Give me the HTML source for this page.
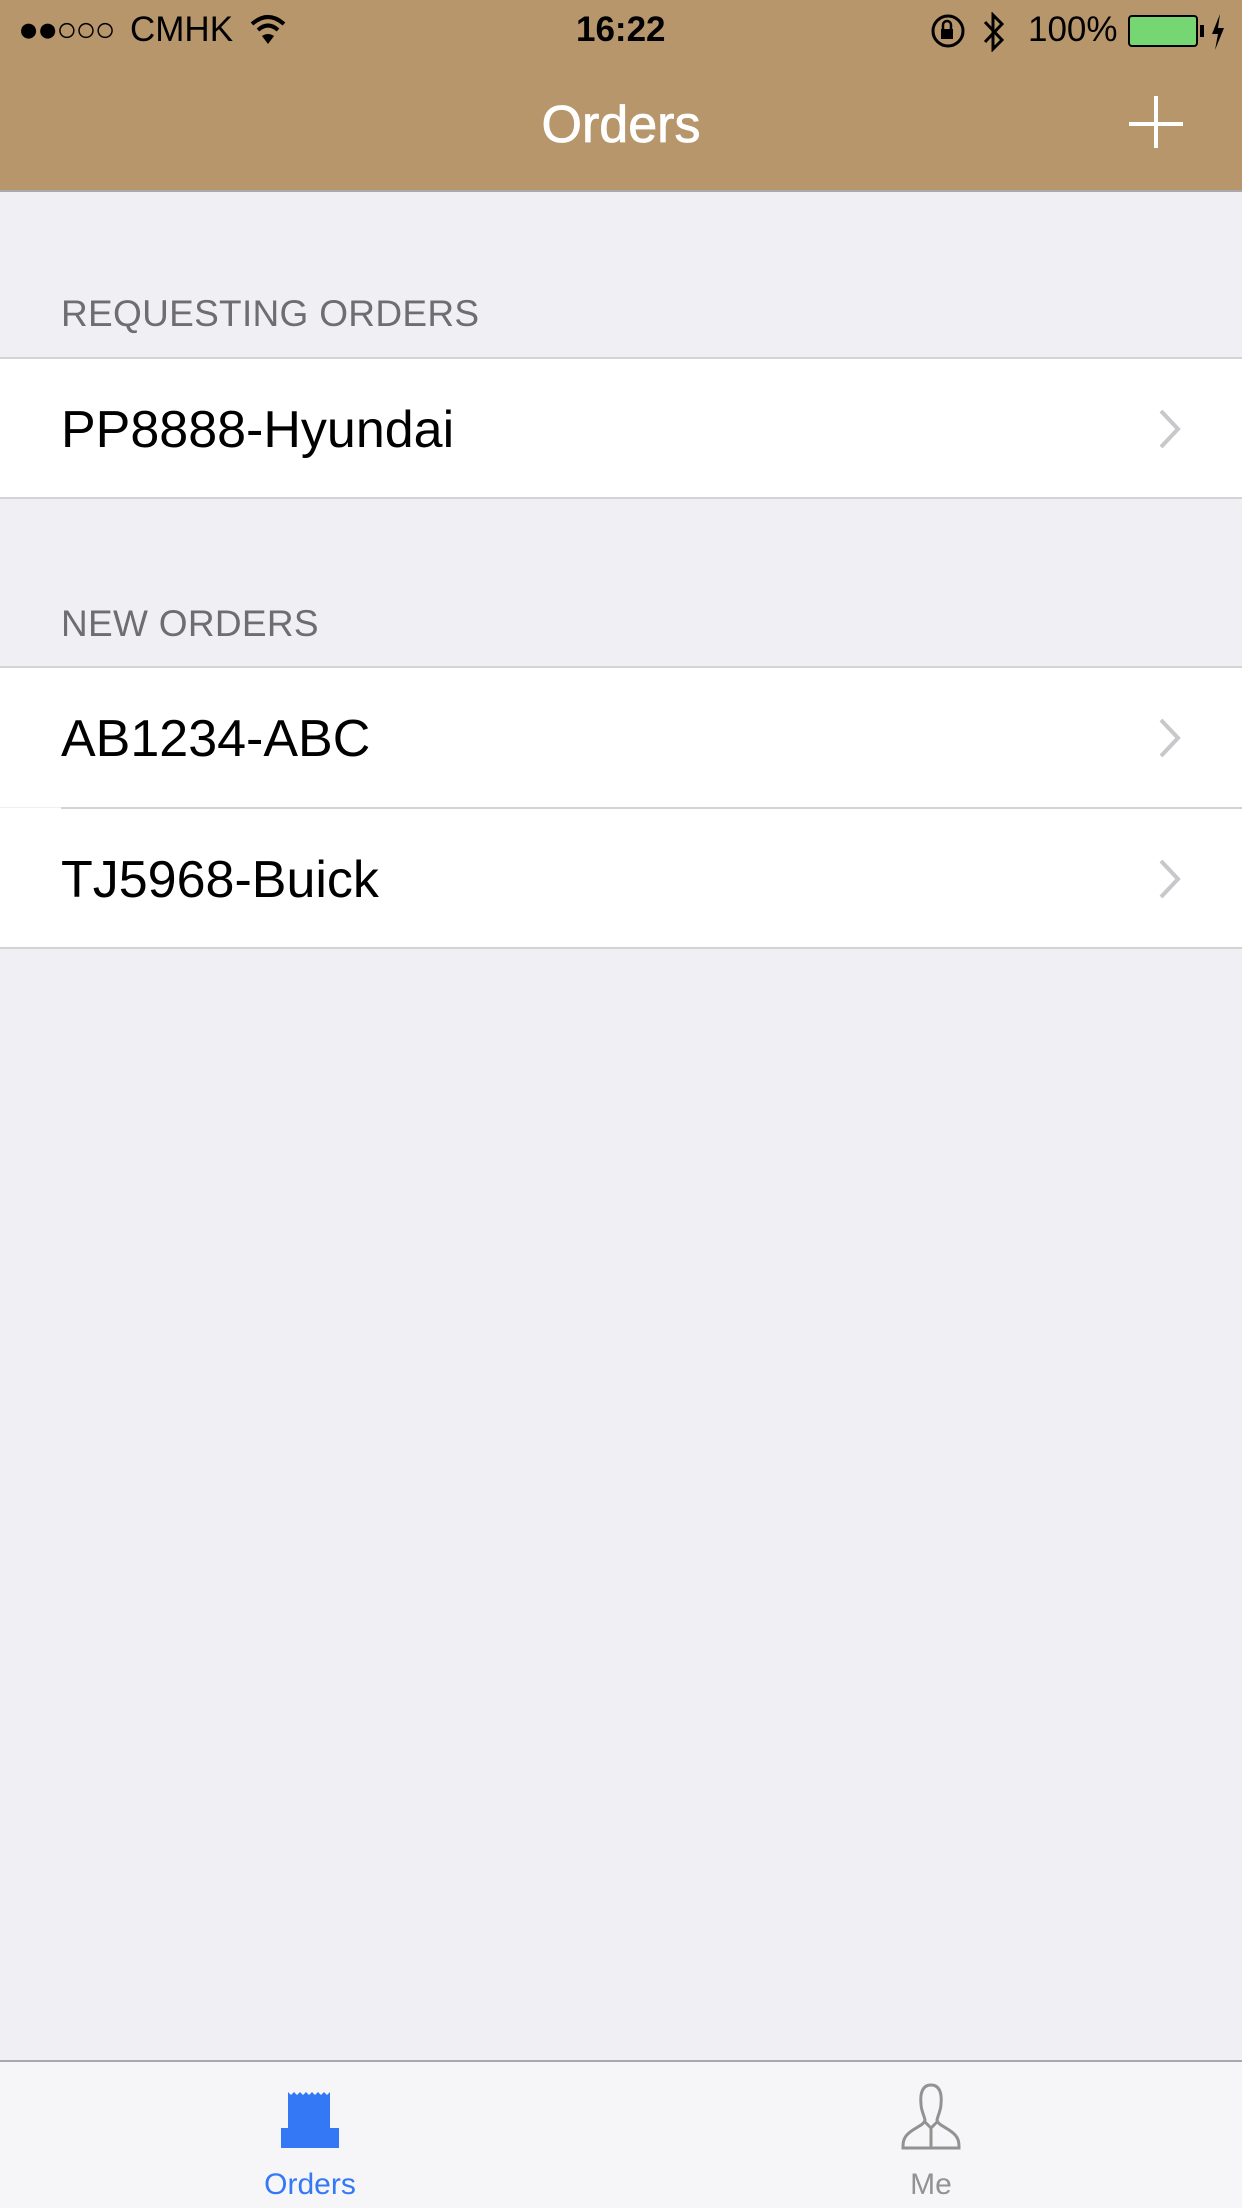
<!DOCTYPE html>
<html><head><meta charset="utf-8"><style>
*{margin:0;padding:0;box-sizing:border-box}
body{width:1242px;height:2208px;background:#efeff4;font-family:"Liberation Sans",sans-serif;position:relative;overflow:hidden}
.nav{position:absolute;left:0;top:0;width:1242px;height:192px;background:#b7966b;border-bottom:2px solid #a8a8ad}
.abs{position:absolute}
.sb{font-size:35px;color:#000;top:10px}
.hdr{position:absolute;left:61px;font-size:37px;color:#6d6d72;letter-spacing:0.3px}
.row{position:absolute;left:0;width:1242px;background:#fff;height:140px}
.row span{position:absolute;left:61px;top:2px;line-height:140px;font-size:52px;color:#000}
.line{position:absolute;height:2px;background:#d3d3d6}
.chev{position:absolute;left:1157px;width:26px;height:42px}
.tab{position:absolute;left:0;top:2060px;width:1242px;height:148px;background:#f6f6f8;border-top:2px solid #a9a9ad}
</style></head><body>
<div class="nav">
 <div class="abs sb" style="left:18px;letter-spacing:-2px">●●○○○</div>
 <div class="abs sb" style="left:130px">CMHK</div>
 <svg class="abs" style="left:250px;top:14px" width="36" height="30" viewBox="0 0 36 30"><path d="M2 10 Q18 -4 34 10" fill="none" stroke="#000" stroke-width="4"/><path d="M8 16 Q18 7 28 16" fill="none" stroke="#000" stroke-width="4"/><path d="M12 22 L18 30 L24 22 Q18 18 12 22Z" fill="#000"/></svg>
 <div class="abs sb" style="left:576px;font-weight:bold">16:22</div>
 <svg class="abs" style="left:930px;top:13px" width="36" height="36" viewBox="0 0 36 36"><circle cx="18" cy="18" r="15" fill="none" stroke="#000" stroke-width="3"/><rect x="11" y="16" width="12" height="10" fill="#000"/><path d="M13 16 V12 a4 4 0 0 1 8 0 V16" fill="none" stroke="#000" stroke-width="2.5"/></svg>
 <svg class="abs" style="left:982px;top:12px" width="24" height="40" viewBox="0 0 24 40"><path d="M3 10 L20 28 L11 37 V3 L20 12 L3 30" fill="none" stroke="#000" stroke-width="3"/></svg>
 <div class="abs sb" style="left:1028px">100%</div>
 <div class="abs" style="left:1128px;top:15px;width:70px;height:32px;border:2px solid #000;border-radius:4px;background:#76d672"></div>
 <div class="abs" style="left:1200px;top:25px;width:4px;height:12px;background:#000"></div>
 <svg class="abs" style="left:1210px;top:14px" width="16" height="36" viewBox="0 0 16 36"><path d="M10 0 L2 20 H8 L5 36 L14 14 H8Z" fill="#000"/></svg>
 <div class="abs" style="left:0;width:1242px;top:95px;text-align:center;font-size:52px;color:#fff;-webkit-text-stroke:0.8px #fff">Orders</div>
 <div class="abs" style="left:1129px;top:122px;width:54px;height:4px;background:#fff"></div>
 <div class="abs" style="left:1154px;top:96px;width:4px;height:52px;background:#fff"></div>
</div>

<div class="hdr" style="top:293px">REQUESTING ORDERS</div>
<div class="row" style="top:358px"><span>PP8888-Hyundai</span></div>
<div class="line" style="left:0;width:1242px;top:357px"></div>
<div class="line" style="left:0;width:1242px;top:497px"></div>

<div class="hdr" style="top:603px">NEW ORDERS</div>
<div class="row" style="top:667px"><span>AB1234-ABC</span></div>
<div class="row" style="top:808px"><span>TJ5968-Buick</span></div>
<div class="line" style="left:0;width:1242px;top:666px"></div>
<div class="line" style="left:61px;width:1181px;top:807px"></div>
<div class="line" style="left:0;width:1242px;top:947px"></div>

<svg class="chev" style="top:408px" viewBox="0 0 26 42"><path d="M4 3 L21 21 L4 39" fill="none" stroke="#c7c7cc" stroke-width="4"/></svg>
<svg class="chev" style="top:717px" viewBox="0 0 26 42"><path d="M4 3 L21 21 L4 39" fill="none" stroke="#c7c7cc" stroke-width="4"/></svg>
<svg class="chev" style="top:858px" viewBox="0 0 26 42"><path d="M4 3 L21 21 L4 39" fill="none" stroke="#c7c7cc" stroke-width="4"/></svg>

<div class="tab">
 <svg class="abs" style="left:279px;top:26px" width="62" height="62" viewBox="0 0 62 62"><path d="M9 4 L12 7 L15 4 L18 7 L21 4 L24 7 L27 4 L30 7 L33 4 L36 7 L39 4 L42 7 L45 4 L48 7 L51 4 V40 H60 V60 H2 V40 H9 Z" fill="#3478f6"/></svg>
 <div class="abs" style="left:210px;width:200px;text-align:center;top:106px;font-size:30px;color:#3478f6">Orders</div>
 <svg class="abs" style="left:900px;top:20px" width="62" height="68" viewBox="0 0 62 68"><path d="M31 3 C22 3 20 12 21 22 C21 28 24 33 25 38 C24 44 12 46 6 54 C3 58 3 62 3 66 H59 C59 62 59 58 56 54 C50 46 38 44 37 38 C38 33 41 28 41 22 C42 12 40 3 31 3Z M25 40 L31 46 L37 40 M31 46 V66" fill="none" stroke="#929292" stroke-width="3"/></svg>
 <div class="abs" style="left:831px;width:200px;text-align:center;top:106px;font-size:30px;color:#929292">Me</div>
</div>
</body></html>
